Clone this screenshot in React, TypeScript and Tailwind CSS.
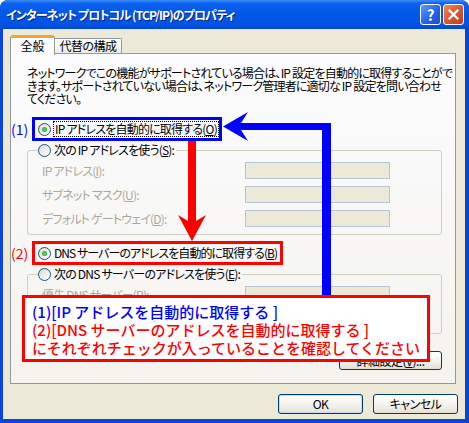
import React from "react";

const ui =
  "font-['Noto_Sans_CJK_JP','Noto_Sans',sans-serif] [font-feature-settings:'palt'] [font-variant-east-asian:proportional-width]";

function Radio({ checked }: { checked?: boolean }) {
  return (
    <span className="flex h-[13px] w-[13px] shrink-0 items-center justify-center rounded-full border border-[#1c5180] bg-[linear-gradient(135deg,#dcd9cf,#ffffff)]">
      {checked && <span className="h-[5px] w-[5px] rounded-full bg-[radial-gradient(circle,#5fdc5f,#1e9a1e)]" />}
    </span>
  );
}

function Field({ label }: { label: React.ReactNode }) {
  return (
    <div className="flex h-[17px] items-center">
      <span className="w-[217px] whitespace-nowrap pl-[14px] text-[12px] leading-[14px] tracking-[-0.8px] text-[#aca899]">
        {label}
      </span>
      <span className="h-[17px] w-[145px] border border-[#b5c5d5] bg-[#ece9d8]" />
    </div>
  );
}

function XpButton({ children, w, primary }: { children: React.ReactNode; w: string; primary?: boolean }) {
  return (
    <div
      className={`${w} flex items-center justify-center whitespace-nowrap rounded-[3px] border border-[#003c74] bg-[linear-gradient(to_bottom,#ffffff,#f2f1ea_60%,#e3e0d2)] text-[12px] leading-[14px] tracking-[-0.5px] text-black ${
        primary ? "shadow-[inset_0_0_0_1px_#c4d8f8]" : ""
      }`}
    >
      {children}
    </div>
  );
}

export default function App() {
  return (
    <div className={`relative h-[423px] w-[469px] overflow-hidden rounded-t-[8px] bg-[#0a44d8] ${ui}`}>
      {/* title bar */}
      <div className="flex h-[29px] items-center gap-[2px] bg-[linear-gradient(to_bottom,#3d8df7_0%,#0b62ef_12%,#0058e6_45%,#0054e3_85%,#0046cf_100%)] pl-[6px] pr-[5px]">
        <span className="flex-1 whitespace-nowrap text-[12px] font-bold tracking-[-0.9px] text-white [text-shadow:1px_1px_0_#0a1e80]">
          インターネット プロトコル (TCP/IP)のプロパティ
        </span>
        <div className="flex h-[21px] w-[21px] items-center justify-center rounded-[3px] border border-white bg-[linear-gradient(135deg,#5b9cff,#2160e6_60%,#1a4fd0)] text-[15px] font-bold leading-none text-white">
          ?
        </div>
        <div className="flex h-[21px] w-[21px] items-center justify-center rounded-[3px] border border-white bg-[linear-gradient(135deg,#ef8a66,#d9532c_55%,#bf3c18)]">
          <svg width="11" height="11" viewBox="0 0 11 11">
            <path d="M1.5 1.5 L9.5 9.5 M9.5 1.5 L1.5 9.5" stroke="#fff" strokeWidth="2.2" strokeLinecap="square" />
          </svg>
        </div>
      </div>

      {/* body */}
      <div className="ml-[3px] mr-[4px] flex h-[390px] flex-col bg-[#ece9d8]">
        <div className="relative z-10 mt-[6px] flex h-[18px] items-end pl-[7px]">
          <div className="-mb-[2px] flex h-[20px] w-[45px] items-center justify-center rounded-t-[3px] border-x border-t-[3px] border-x-[#919b9c] border-t-[#f1a43a] bg-[#fcfcfe] pb-[1px] text-[12px] leading-[14px]">
            全般
          </div>
          <div className="flex h-[15px] w-[67px] items-center justify-center rounded-tr-[2px] border-r border-t border-[#919b9c] bg-[linear-gradient(to_bottom,#ffffff,#ecebe5)] text-[12px] leading-[14px] tracking-[-0.5px]">
            代替の構成
          </div>
        </div>

        <div className="mx-[7px] flex h-[331px] w-[446px] flex-col border border-[#919b9c] bg-[linear-gradient(to_bottom,#fcfcfe,#f4f3ee)]">
          <div className="ml-[16px] mt-[12px] whitespace-nowrap text-[12px] leading-[13px] tracking-[-0.8px] text-black">
            <div>ネットワークでこの機能がサポートされている場合は、IP 設定を自動的に取得することがで</div>
            <div>きます。サポートされていない場合は、ネットワーク管理者に適切な IP 設定を問い合わせ</div>
            <div>てください。</div>
          </div>

          <div className="mt-[12px] flex items-center">
            <span className="w-[21px] text-[14px] leading-[16px] text-[#0000ff]">(1)</span>
            <div className="flex h-[24px] w-[190px] items-center gap-[2px] border-[3px] border-[#0000ff] pl-[3px]">
              <Radio checked />
              <span className="whitespace-nowrap border border-dotted border-black px-[1px] text-[12px] leading-[14px] tracking-[-0.8px]">
                IP アドレスを自動的に取得する(<span className="underline">O</span>)
              </span>
            </div>
          </div>

          <fieldset className="ml-[16px] mt-[2px] w-[415px] rounded-[3px] border border-[#d0d0bf] pb-[7px]">
            <legend className="ml-[10px] flex h-[14px] items-center gap-[3px] pr-[2px]">
              <Radio />
              <span className="whitespace-nowrap text-[12px] leading-[14px] tracking-[-0.8px]">
                次の IP アドレスを使う(<span className="underline">S</span>):
              </span>
            </legend>
            <div className="mt-[5px] flex flex-col gap-[7px]">
              <Field label={<>IP アドレス(<span className="underline">I</span>):</>} />
              <Field label={<>サブネット マスク(<span className="underline">U</span>):</>} />
              <Field label={<>デフォルト ゲートウェイ(<span className="underline">D</span>):</>} />
            </div>
          </fieldset>

          <div className="mt-[6px] flex items-center">
            <span className="w-[21px] text-[14px] leading-[16px] text-[#ff0000]">(2)</span>
            <div className="flex h-[24px] w-[251px] items-center gap-[3px] border-[3px] border-[#ff0000] pl-[3px]">
              <Radio checked />
              <span className="whitespace-nowrap text-[12px] leading-[14px] tracking-[-0.95px]">
                DNS サーバーのアドレスを自動的に取得する(<span className="underline">B</span>)
              </span>
            </div>
          </div>

          <fieldset className="ml-[16px] mt-[2px] w-[415px] rounded-[3px] border border-[#d0d0bf] pb-[6px]">
            <legend className="ml-[10px] flex h-[14px] items-center gap-[3px] pr-[2px]">
              <Radio />
              <span className="whitespace-nowrap text-[12px] leading-[14px] tracking-[-0.8px]">
                次の DNS サーバーのアドレスを使う(<span className="underline">E</span>):
              </span>
            </legend>
            <div className="mt-[5px] flex flex-col gap-[7px]">
              <Field label={<>優先 DNS サーバー(<span className="underline">P</span>):</>} />
              <Field label={<>代替 DNS サーバー(<span className="underline">A</span>):</>} />
            </div>
          </fieldset>

          <div className="mr-[13px] mt-[17px] flex justify-end">
            <XpButton w="w-[103px] h-[19px]">
              詳細設定(<span className="underline">V</span>)...
            </XpButton>
          </div>
        </div>

        <div className="mt-[10px] flex justify-end gap-[10px] pr-[7px]">
          <XpButton w="w-[85px] h-[20px]" primary>
            OK
          </XpButton>
          <XpButton w="w-[85px] h-[20px]">キャンセル</XpButton>
        </div>
      </div>

      {/* annotation arrows */}
      <svg className="pointer-events-none absolute left-0 top-0" width="469" height="423" viewBox="0 0 469 423">
        <rect x="240" y="123" width="91" height="7" fill="#0000ff" />
        <rect x="322" y="123" width="9" height="175" fill="#0000ff" />
        <polygon points="223,126.5 248,112 241,123 241,130 248,141" fill="#0000ff" />
        <rect x="188" y="141" width="8" height="80" fill="#ff0000" />
        <polygon points="192,241 178,215 188,221 196,221 206,215" fill="#ff0000" />
      </svg>

      {/* callout */}
      <div className="absolute left-[22px] top-[295px] h-[67px] w-[408px] border-[3px] border-[#ff0000] bg-white pl-[7px] pt-[5px] text-[15px] font-medium leading-[18px] [font-feature-settings:normal] [font-variant-east-asian:normal]">
        <div className="text-[#0000ff]">(1)[IP アドレスを自動的に取得する ]</div>
        <div className="text-[#ff0000]">(2)[DNS サーバーのアドレスを自動的に取得する ]</div>
        <div className="text-[#ff0000]">にそれぞれチェックが入っていることを確認してください</div>
      </div>
    </div>
  );
}
